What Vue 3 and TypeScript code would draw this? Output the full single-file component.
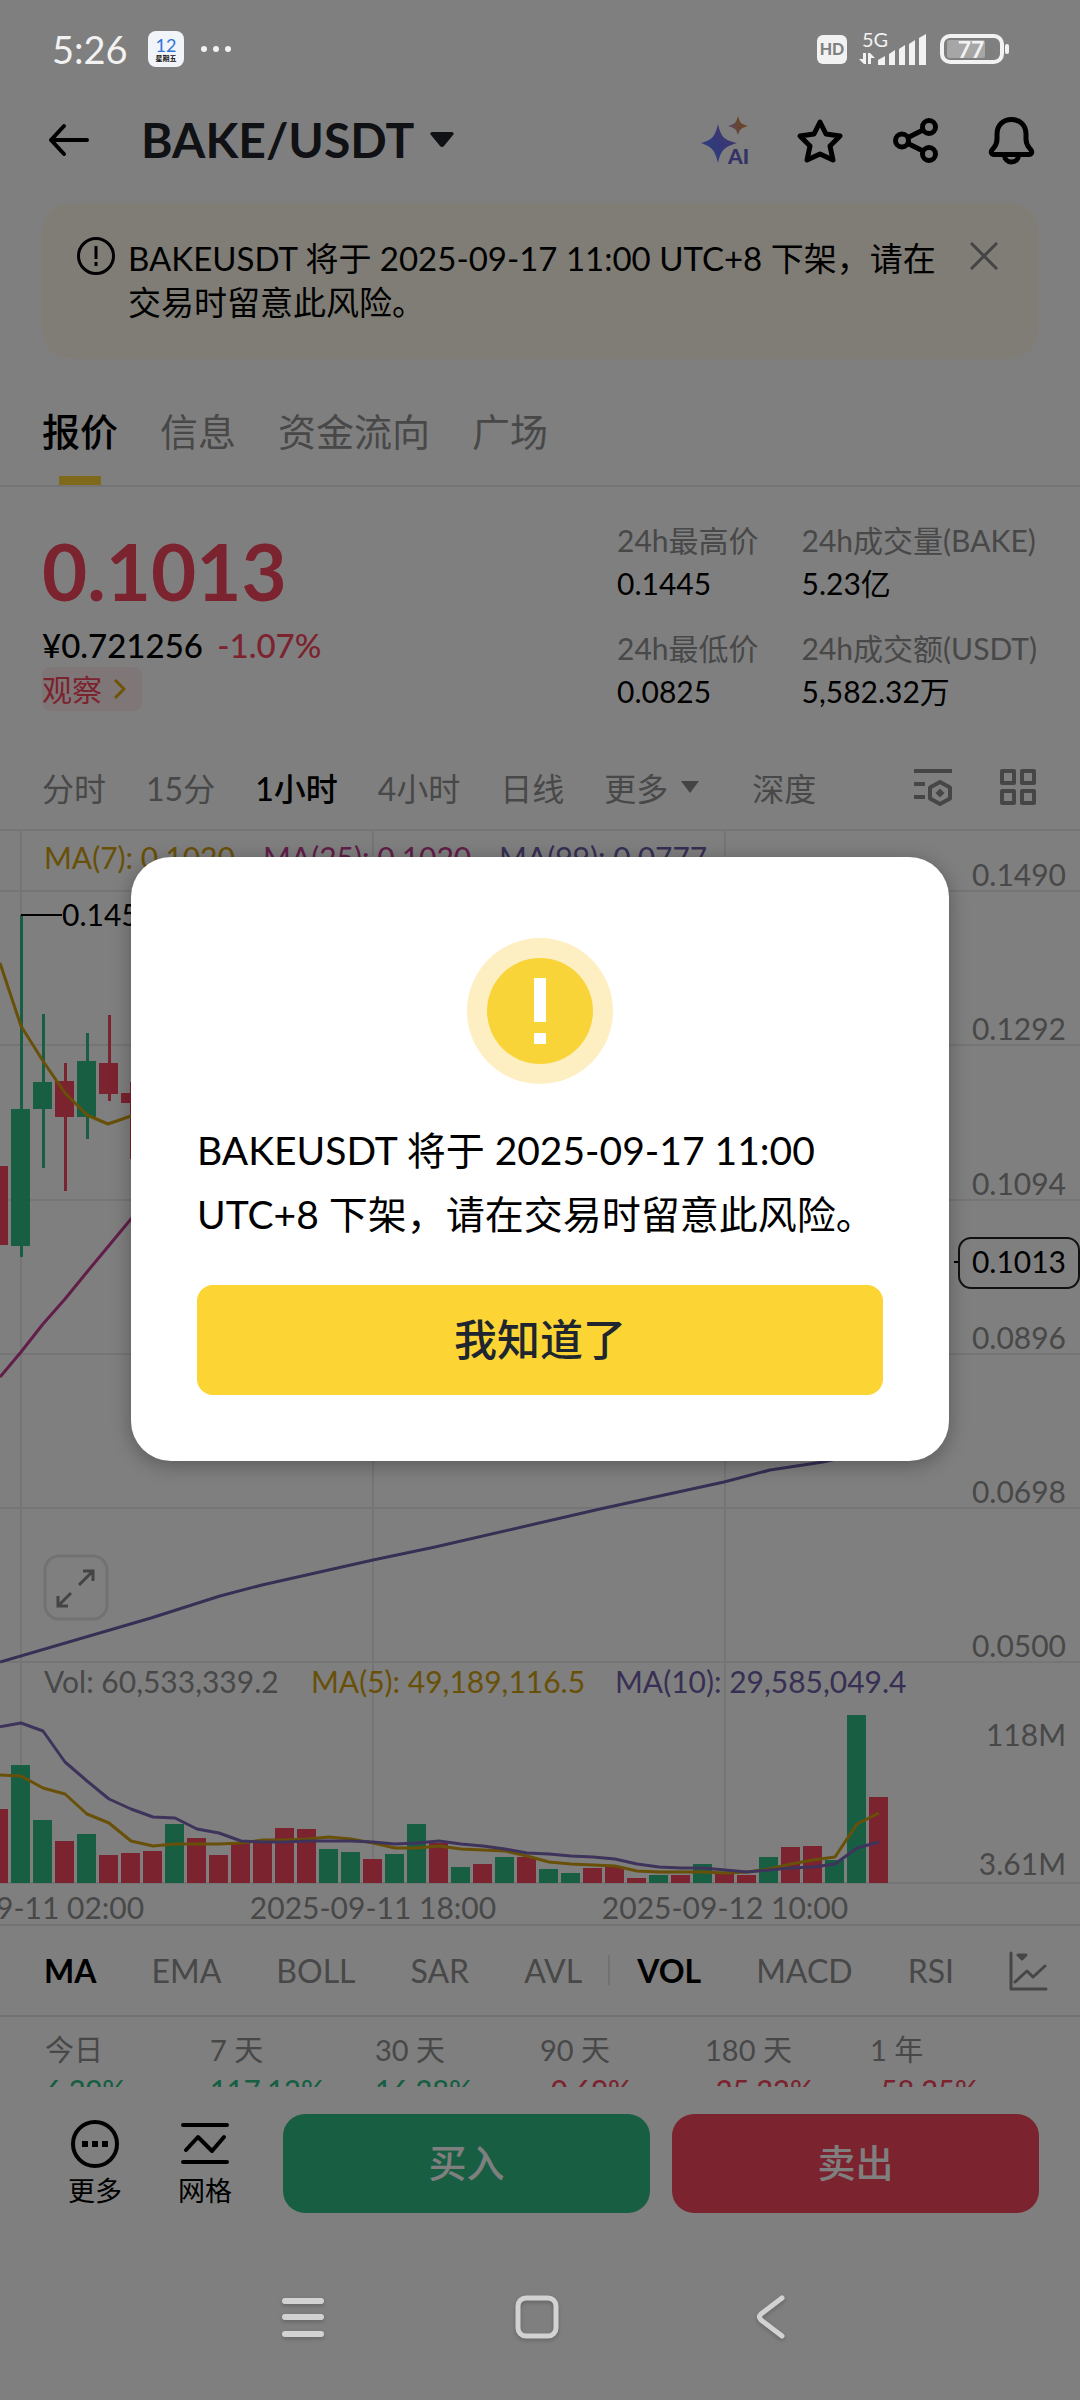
<script setup lang="ts">
import { ref } from 'vue'

interface Candle { k: number; up: boolean; high: number; low: number; top: number; bottom: number }

const showDialog = ref(true)
const showNotice = ref(true)

const tabs = ['报价', '信息', '资金流向', '广场']
const frames = ['分时', '15分', '1小时', '4小时', '日线']
const mainIndicators = ['MA', 'EMA', 'BOLL', 'SAR', 'AVL']
const subIndicators = ['VOL', 'MACD', 'RSI']
const periods = [
  { label: '今日', value: '6.29%', up: true },
  { label: '7 天', value: '117.12%', up: true },
  { label: '30 天', value: '16.28%', up: true },
  { label: '90 天', value: '-0.69%', up: false },
  { label: '180 天', value: '-25.32%', up: false },
  { label: '1 年', value: '-58.25%', up: false },
]

// Chart geometry, in the units of the chart's viewBox
const step = 22
const firstX = 21
const volumeBase = 1052
const x = (k: number) => firstX + step * k

const priceLabels = [
  { text: '0.1490', line: 60 },
  { text: '0.1292', line: 214 },
  { text: '0.1094', line: 369 },
  { text: '0.0896', line: 523 },
  { text: '0.0698', line: 677 },
  { text: '0.0500', line: 831 },
]
const timeLabels = [
  { text: '2025-09-11 02:00', k: 0 },
  { text: '2025-09-11 18:00', k: 16 },
  { text: '2025-09-12 10:00', k: 32 },
]
const candles: Candle[] = [
  { k: -1, up: false, high: 335, low: 414, top: 335, bottom: 414 },
  { k: 0, up: true, high: 84, low: 426, top: 278, bottom: 415 },
  { k: 1, up: true, high: 183, low: 337, top: 251, bottom: 278 },
  { k: 2, up: false, high: 232, low: 360, top: 250, bottom: 286 },
  { k: 3, up: true, high: 202, low: 308, top: 230, bottom: 286 },
  { k: 4, up: false, high: 184, low: 270, top: 232, bottom: 263 },
  { k: 5, up: false, high: 251, low: 328, top: 262, bottom: 272 },
]
const volumeHeights = [
  74, 118, 63, 42, 49, 28, 30, 32, 59, 45, 28, 40, 40, 55, 54, 34, 31, 24, 29, 59, 40,
  16, 19, 26, 26, 14, 10, 15, 16, 5, 8, 8, 19, 9, 8, 26, 36, 37, 23, 168, 86,
]
const volumeSides = 'rggrgrrrgrrrrrrggrggrgrgrggrrrgrgrrgrrggr'
const volumes = volumeHeights.map((h, i) => ({ k: i - 1, h, up: volumeSides[i] === 'g' }))

const volMa5 = [
  166, 165, 153, 147, 127, 118, 100, 95, 97, 97, 97, 98, 101, 101, 102, 104, 102, 98, 93, 93, 95,
  92, 91, 90, 85, 79, 77, 76, 75, 70, 69, 69, 69, 68, 69, 72, 77, 81, 84, 117, 128,
]
const volMa10 = [
  214, 218, 210, 179, 160, 142, 132, 124, 123, 112, 108, 100, 99, 99, 100, 100, 100, 99, 97, 98, 100,
  97, 95, 92, 88, 87, 85, 84, 82, 77, 74, 73, 73, 71, 69, 71, 73, 74, 77, 93, 99,
]
const volumeLine = (values: number[]) =>
  values.map((v, i) => `${x(i - 1)},${volumeBase + 58 - v}`).join(' ')
</script>

<template>
  <div class="screen">
    <div class="status">
      <span class="clock">5:26</span>
      <svg class="calendar" width="36" height="36" viewBox="0 0 36 36">
        <rect width="36" height="36" rx="8" fill="#f1f4f8" />
        <text x="18" y="21" text-anchor="middle" font-size="18" fill="#2f74dc">12</text>
        <text x="18" y="30" text-anchor="middle" font-size="7" font-weight="700" fill="#111">星期五</text>
      </svg>
      <svg width="32" height="8" viewBox="0 0 32 8" fill="#f2f2f2">
        <circle cx="4" cy="4" r="3" /><circle cx="16" cy="4" r="3" /><circle cx="28" cy="4" r="3" />
      </svg>
      <svg class="signals" width="194" height="40" viewBox="816 29 194 40" fill="#f2f2f2">
        <rect x="817" y="35" width="30" height="29" rx="6" />
        <text x="832" y="55" text-anchor="middle" font-size="16" font-weight="900" fill="#808080">HD</text>
        <text x="862" y="47" font-size="20">5G</text>
        <path d="M863 53h3v11h-2l-5-5h4zM868 64V53h2l5 5h-4v6z" />
        <path d="M878 60l7-4v9h-7zM889 54l6-4v15h-6zM899 49l6-4v20h-6zM909 44l6-4v25h-6zM919 38l7-4v31h-7z" />
        <rect x="947" y="40" width="38" height="18" rx="2" fill="#a6a6a6" />
        <rect x="942" y="36" width="60" height="26" rx="8" fill="none" stroke="#f2f2f2" stroke-width="4" />
        <rect x="1005" y="44" width="4" height="10" rx="2" />
        <text x="971" y="58" text-anchor="middle" font-size="23" font-weight="700">77</text>
      </svg>
    </div>

    <header class="header">
      <button class="icon back" aria-label="返回">
        <svg width="42" height="34" viewBox="0 0 42 34" fill="none" stroke="#000" stroke-width="4" stroke-linecap="round" stroke-linejoin="round">
          <path d="M16 3L3 17L16 31M3 17H39" />
        </svg>
      </button>
      <button class="pair">
        BAKE/USDT
        <svg width="24" height="16" viewBox="0 0 24 16"><path d="M2 0h20q3 1 1 3L14 14q-2 2-4 0L1 3q-2-2 1-3z" fill="#1e2329" /></svg>
      </button>
      <div class="actions">
        <button class="icon" aria-label="AI">
          <svg width="52" height="52" viewBox="0 0 52 52">
            <defs>
              <linearGradient id="spark" x1="0" y1="1" x2="1" y2="0"><stop offset="0" stop-color="#4a8fff" /><stop offset=".5" stop-color="#6a70f0" /><stop offset="1" stop-color="#8f6ad8" /></linearGradient>
              <linearGradient id="ember" x1="0" y1=".6" x2="1" y2=".4"><stop offset="0" stop-color="#b58ae0" /><stop offset=".6" stop-color="#d08a50" /></linearGradient>
            </defs>
            <path d="M18 10C21 23 24 26 37 29C24 33 21 36 18 49C15 36 12 33 1 29C12 26 15 23 18 10z" fill="url(#spark)" />
            <path d="M38 2C40 9 41 10 48 12C41 14 40 15 38 21C36 15 35 14 28 12C35 10 36 9 38 2z" fill="url(#ember)" />
            <text x="28" y="50" font-size="21" font-weight="900" fill="#6a64d0">AI</text>
          </svg>
        </button>
        <button class="icon" aria-label="收藏">
          <svg width="52" height="52" viewBox="0 0 52 52" fill="none" stroke="#000" stroke-width="5" stroke-linejoin="round">
            <path d="M25 8L31 20L45 22L35 32L38 46L25 40L12 46L15 32L5 22L19 20Z" />
          </svg>
        </button>
        <button class="icon" aria-label="分享">
          <svg width="52" height="52" viewBox="0 0 52 52" fill="none" stroke="#000" stroke-width="5">
            <circle cx="39" cy="13" r="6.500" /><circle cx="12" cy="26.500" r="6.500" /><circle cx="39" cy="40" r="6.500" />
            <path d="M18 23.500L33 16M18 29.500L33 37" />
          </svg>
        </button>
        <button class="icon" aria-label="提醒">
          <svg width="52" height="52" viewBox="0 0 52 52" fill="none" stroke="#000" stroke-width="5" stroke-linejoin="round">
            <path d="M26.500 5.500c-8.500 0-14.500 6-14.500 14.500v5c0 3.500-1 6-3 8.500l-2 2.500c-1.500 2-.5 4.500 2 4.500h35c2.500 0 3.500-2.500 2-4.500l-2-2.500c-2-2.500-3-5-3-8.500v-5c0-8.500-6-14.500-14.500-14.500z" />
            <path d="M19.500 41c0 4 3 7 7 7s7-3 7-7" />
          </svg>
        </button>
      </div>
    </header>

    <section v-if="showNotice" class="notice">
      <svg width="40" height="40" viewBox="0 0 40 40" fill="none" stroke="#000" stroke-width="3">
        <circle cx="20" cy="20" r="17.500" /><path d="M20 10v13M20 26v4" />
      </svg>
      <p>BAKEUSDT 将于 2025-09-17 11:00 UTC+8 下架，请在交易时留意此风险。</p>
      <button class="icon close" aria-label="关闭" @click="showNotice = false">
        <svg width="28" height="28" viewBox="0 0 28 28" fill="none" stroke="#888" stroke-width="3"><path d="M1 1L27 27M27 1L1 27" /></svg>
      </button>
    </section>

    <nav class="tabs">
      <button v-for="(t, i) in tabs" :key="t" :class="{ active: i === 0 }">{{ t }}</button>
    </nav>

    <section class="summary">
      <div class="quote">
        <div class="price">0.1013</div>
        <div class="fiat">¥0.721256 <span>-1.07%</span></div>
        <a class="tag" href="#">观察
          <svg width="12" height="20" viewBox="0 0 12 20" fill="none" stroke="#e0a80b" stroke-width="3"><path d="M1 1L10 10L1 19" /></svg>
        </a>
      </div>
      <dl class="stats">
        <div><dt>24h最高价</dt><dd>0.1445</dd></div>
        <div><dt>24h成交量(BAKE)</dt><dd>5.23亿</dd></div>
        <div><dt>24h最低价</dt><dd>0.0825</dd></div>
        <div><dt>24h成交额(USDT)</dt><dd>5,582.32万</dd></div>
      </dl>
    </section>

    <div class="frames">
      <button v-for="(f, i) in frames" :key="f" :class="{ active: i === 2 }">{{ f }}</button>
      <button class="more">更多 <svg width="20" height="12" viewBox="0 0 20 12"><path d="M1 0H19L10 12z" fill="#888" /></svg></button>
      <button class="depth">深度</button>
      <span class="tools">
        <button class="icon" aria-label="图表设置">
          <svg width="38" height="38" viewBox="0 0 38 38" fill="none" stroke="#8c8c8c" stroke-width="4">
            <path d="M0 3H38M0 16H11M0 29H11" />
            <path d="M26 14L36 19.500V30.500L26 36L16 30.500V19.500Z" stroke-linejoin="round" />
            <path d="M26 20.500L30.500 25L26 29.500L21.500 25Z" fill="#8c8c8c" stroke="none" />
          </svg>
        </button>
        <button class="icon" aria-label="布局">
          <svg width="36" height="38" viewBox="0 0 36 38" fill="none" stroke="#8c8c8c" stroke-width="4" stroke-linejoin="round">
            <rect x="2" y="3" width="12" height="12" /><rect x="22" y="3" width="12" height="12" />
            <rect x="2" y="23" width="12" height="12" /><rect x="22" y="23" width="12" height="12" />
          </svg>
        </button>
      </span>
    </div>

    <section class="chart">
      <svg class="plot" viewBox="0 0 1080 1093" font-size="30">
        <g stroke="#ebebeb" stroke-width="2">
          <line v-for="p in priceLabels" :key="p.text" x1="0" x2="1080" :y1="p.line" :y2="p.line" />
          <line v-for="t in timeLabels" :key="t.text" :x1="x(t.k)" :x2="x(t.k)" y1="0" :y2="volumeBase" />
          <line x1="0" x2="1080" :y1="volumeBase" :y2="volumeBase" />
        </g>
        <g v-for="c in candles" :key="c.k" :class="c.up ? 'rise' : 'fall'">
          <rect :x="x(c.k) - 1" :y="c.high" width="3" :height="c.low - c.high" />
          <rect :x="x(c.k) - 10" :y="c.top" width="19" :height="c.bottom - c.top" />
        </g>
        <rect v-for="v in volumes" :key="v.k" :class="v.up ? 'rise' : 'fall'" :x="x(v.k) - 10" :y="volumeBase - v.h" width="19" :height="v.h" />
        <g fill="none" stroke-width="3" stroke-linejoin="round">
          <polyline stroke="#d0a010" points="0,132 21,195 43,230 65,262 87,284 108,293 131,285 160,270" />
          <polyline stroke="#c23d92" points="0,546 21,521 43,493 65,468 87,441 131,388 160,352" />
          <polyline stroke="#6f5fa8" points="0,831 151,787 220,765 262,754 373,729 435,716 600,678 724,651 770,639 823,631 870,620" />
          <polyline stroke="#d0a010" :points="volumeLine(volMa5)" />
          <polyline stroke="#7d66b4" :points="volumeLine(volMa10)" />
        </g>
        <path d="M21 84H62" stroke="#000" stroke-width="2" />
        <text x="62" y="95" fill="#000">0.1458</text>

        <text x="44" y="38" class="gold">MA(7): 0.1020</text>
        <text x="263" y="38" class="pink">MA(25): 0.1020</text>
        <text x="499" y="38" class="violet">MA(99): 0.0777</text>
        <text x="44" y="862" class="muted">Vol: 60,533,339.2</text>
        <text x="311" y="862" class="gold">MA(5): 49,189,116.5</text>
        <text x="615" y="862" class="violet">MA(10): 29,585,049.4</text>

        <g class="muted" text-anchor="end">
          <text v-for="p in priceLabels" :key="p.text" x="1066" :y="p.line - 5">{{ p.text }}</text>
          <text x="1066" y="915">118M</text>
          <text x="1066" y="1044">3.61M</text>
        </g>
        <g class="muted" text-anchor="middle">
          <text v-for="t in timeLabels" :key="t.text" :x="x(t.k)" y="1088">{{ t.text }}</text>
        </g>
        <path d="M954 431H958" stroke="#000" stroke-width="2" />
        <rect x="959" y="407" width="120" height="50" rx="12" fill="#fff" stroke="#222" stroke-width="2" />
        <text x="1066" y="442" text-anchor="end" fill="#000">0.1013</text>

        <g fill="none" stroke="#e4e4e4" stroke-width="3">
          <rect x="45" y="725" width="62" height="63" rx="14" fill="#fff" />
          <path d="M79 754L93 740M83 740H93V750M71 762L58 775M58 765V775H68" stroke="#888" />
        </g>
      </svg>
    </section>

    <div class="indicators">
      <button v-for="(n, i) in mainIndicators" :key="n" :class="{ active: i === 0 }">{{ n }}</button>
      <button v-for="(n, i) in subIndicators" :key="n" :class="{ active: i === 0, first: i === 0 }">{{ n }}</button>
      <button class="icon trend" aria-label="指标">
        <svg width="40" height="40" viewBox="0 0 40 40" fill="none" stroke="#8c8c8c" stroke-width="3" stroke-linecap="round" stroke-linejoin="round">
          <path d="M2 2V38H37M6 31L18 20L24 26L36 15" /><path d="M9 4H17L13 8Z" fill="#8c8c8c" />
        </svg>
      </button>
    </div>

    <div class="periods">
      <div v-for="p in periods" :key="p.label">
        <span>{{ p.label }}</span>
        <b :class="p.up ? 'up' : 'down'">{{ p.value }}</b>
      </div>
    </div>

    <footer class="trade">
      <button class="shortcut">
        <svg width="48" height="50" viewBox="0 0 48 50" fill="none" stroke="#000" stroke-width="4">
          <circle cx="24" cy="25" r="22" /><path d="M11 25h6M21 25h6M31 25h6" stroke-width="6" />
        </svg>
        更多
      </button>
      <button class="shortcut">
        <svg width="48" height="50" viewBox="0 0 48 50" fill="none" stroke="#000" stroke-width="4" stroke-linecap="round" stroke-linejoin="round">
          <path d="M2 6H46M2 43H46M5 31L17 18L31 32L43 18" />
        </svg>
        网格
      </button>
      <button class="order buy">买入</button>
      <button class="order sell">卖出</button>
    </footer>

    <nav class="system">
      <button class="icon" aria-label="最近任务">
        <svg width="44" height="48" viewBox="0 0 44 48" stroke="#d2d2d2" stroke-width="6" stroke-linecap="round"><path d="M4 8H40M4 24H40M4 41H40" /></svg>
      </button>
      <button class="icon" aria-label="主屏幕">
        <svg width="44" height="48" viewBox="0 0 44 48" fill="none" stroke="#d2d2d2" stroke-width="5"><rect x="3" y="5" width="38" height="38" rx="8" /></svg>
      </button>
      <button class="icon" aria-label="返回上一页">
        <svg width="44" height="48" viewBox="0 0 44 48" fill="none" stroke="#d2d2d2" stroke-width="5" stroke-linecap="round" stroke-linejoin="round"><path d="M33 5L12 21Q9 24 12 27L33 43" /></svg>
      </button>
    </nav>

    <div v-if="showDialog" class="mask">
      <div class="dialog" role="alertdialog" aria-modal="true" aria-describedby="risk">
        <svg width="146" height="146" viewBox="0 0 146 146">
          <circle cx="73" cy="73" r="73" fill="#feefc3" /><circle cx="73" cy="73" r="53" fill="#f9d438" />
          <path d="M67 40h12v44H67zM67 95h12v11H67z" fill="#fff" />
        </svg>
        <p id="risk">BAKEUSDT 将于 2025-09-17 11:00 UTC+8 下架，请在交易时留意此风险。</p>
        <button class="confirm" @click="showDialog = false">我知道了</button>
      </div>
    </div>
  </div>
</template>

<style>
body {
  margin: 0;
  background: #fff;
}
</style>

<style scoped>
.screen {
  position: relative;
  display: flex;
  flex-direction: column;
  min-height: 100vh;
  overflow: hidden;
  background: #fff;
  color: #000;
  font-family: Lato, 'Noto Sans CJK SC', sans-serif;
}
svg {
  display: block;
  flex: none;
}
button {
  padding: 0;
  border: 0;
  background: none;
  color: inherit;
  font: inherit;
  white-space: nowrap;
}
p, dl, dd {
  margin: 0;
}
.status {
  position: relative;
  z-index: 3;
  display: flex;
  align-items: center;
  height: 98px;
  padding: 0 70px 0 52px;
  color: #f2f2f2;
}
.clock {
  font-size: 38px;
}
.calendar {
  margin: 0 16px 0 20px;
}
.signals {
  margin-left: auto;
}
.header {
  display: flex;
  align-items: center;
  height: 83px;
  padding: 0 43px 0 48px;
}
.pair {
  display: flex;
  align-items: center;
  gap: 16px;
  margin-left: 51px;
  color: #1e2329;
  font-size: 48px;
  font-weight: 700;
  line-height: 60px;
}
.actions {
  display: flex;
  gap: 43px;
  margin-left: auto;
}
.notice {
  display: flex;
  align-items: flex-start;
  gap: 12px;
  margin: 22px 42px 0;
  padding: 33px 40px 35px 34px;
  border-radius: 28px;
  background: #fffaeb;
}
.notice p {
  flex: 1;
  font-size: 33px;
  line-height: 44px;
}
.notice .close {
  padding-top: 6px;
}
.tabs {
  display: flex;
  gap: 42px;
  margin-top: 18px;
  padding: 0 42px;
  border-bottom: 2px solid #ebebeb;
}
.tabs button {
  position: relative;
  height: 108px;
  padding-bottom: 4px;
  color: #909090;
  font-size: 38px;
}
.tabs .active {
  color: #000;
  font-weight: 500;
}
.tabs .active::after {
  content: '';
  position: absolute;
  bottom: 0;
  left: 50%;
  width: 42px;
  height: 9px;
  margin-left: -21px;
  background: #fcd535;
}
.summary {
  display: flex;
  justify-content: space-between;
  padding: 32px 43px 0 42px;
}
.price {
  color: #f6465d;
  font-size: 78px;
  font-weight: 700;
  line-height: 104px;
}
.fiat {
  font-size: 33px;
  font-weight: 500;
  line-height: 44px;
}
.fiat span {
  margin-left: 6px;
  color: #f6465d;
}
.tag {
  display: inline-flex;
  align-items: center;
  gap: 12px;
  padding-right: 16px;
  border-radius: 8px;
  background: #ffeeee;
  color: #f6465d;
  font-size: 30px;
  line-height: 44px;
  text-decoration: none;
}
.stats {
  display: grid;
  grid-template-columns: auto auto;
  gap: 22px 43px;
  font-size: 30px;
  line-height: 43px;
}
.stats dt {
  color: #909090;
}
.frames {
  display: flex;
  align-items: center;
  gap: 40px;
  height: 80px;
  margin-top: 34px;
  padding: 0 44px 2px 42px;
  border-bottom: 2px solid #ebebeb;
  color: #909090;
  font-size: 32px;
}
.frames .active {
  color: #000;
  font-weight: 500;
}
.more {
  display: flex;
  align-items: center;
  gap: 12px;
}
.depth {
  margin-left: 12px;
}
.tools {
  display: flex;
  gap: 48px;
  margin-left: auto;
}
.plot {
  width: 100%;
}
.rise {
  fill: #2ebd85;
}
.fall {
  fill: #f6465d;
}
.gold {
  fill: #d0a010;
}
.pink {
  fill: #c23d92;
}
.violet {
  fill: #6f5fa8;
}
.muted {
  fill: #909090;
}
.indicators {
  display: flex;
  align-items: center;
  gap: 55px;
  height: 93px;
  padding-left: 44px;
  border: solid #e6e6e6;
  border-width: 2px 0;
  box-sizing: border-box;
  color: #909090;
  font-size: 32px;
}
.indicators .active {
  color: #000;
  font-weight: 700;
}
.indicators .first {
  position: relative;
}
.first::before {
  content: '';
  position: absolute;
  top: 4px;
  left: -29px;
  width: 2px;
  height: 30px;
  background: #e4e4e4;
}
.periods {
  display: flex;
  height: 70px;
  padding: 0 45px;
  overflow: hidden;
}
.periods div {
  flex: none;
  width: 165px;
  padding-top: 13px;
  color: #909090;
  font-size: 29px;
  line-height: 40px;
}
.periods span,
.periods b {
  display: block;
}
.periods b {
  font-weight: 500;
}
.periods .up {
  color: #2ebd85;
}
.periods .down {
  color: #f6465d;
}
.trade {
  display: flex;
  align-items: flex-start;
  padding: 27px 41px 0 67px;
}
.shortcut {
  display: flex;
  flex-direction: column;
  align-items: center;
  width: 56px;
  margin: 5px 54px 0 0;
  font-size: 27px;
  line-height: 44px;
}
.order {
  flex: 1;
  height: 99px;
  padding-bottom: 6px;
  border-radius: 22px;
  color: #fff;
  font-size: 38px;
  font-weight: 500;
}
.shortcut + .order {
  margin-left: -4px;
}
.buy {
  background: #2ebd85;
}
.sell {
  margin-left: 22px;
  background: #f6465d;
}
.system {
  position: relative;
  z-index: 3;
  display: flex;
  justify-content: center;
  gap: 190px;
  margin-top: 80px;
  padding: 0 6px 59px 0;
  filter: drop-shadow(0 2px 2px rgba(0, 0, 0, 0.2));
}
.mask {
  position: absolute;
  inset: 0;
  z-index: 2;
  display: flex;
  align-items: center;
  justify-content: center;
  padding: 0 131px 82px;
  background: rgba(0, 0, 0, 0.5);
}
.dialog {
  display: flex;
  flex: 1;
  flex-direction: column;
  align-items: center;
  padding: 81px 66px 66px;
  border-radius: 40px;
  background: #fff;
  box-shadow: 0 4px 20px rgba(0, 0, 0, 0.3);
}
.dialog p {
  width: 100%;
  margin-top: 34px;
  font-size: 39px;
  line-height: 64px;
}
.confirm {
  width: 100%;
  height: 110px;
  margin-top: 39px;
  padding-bottom: 6px;
  border-radius: 16px;
  background: #fcd535;
  color: #202630;
  font-size: 43px;
  font-weight: 500;
}
</style>
